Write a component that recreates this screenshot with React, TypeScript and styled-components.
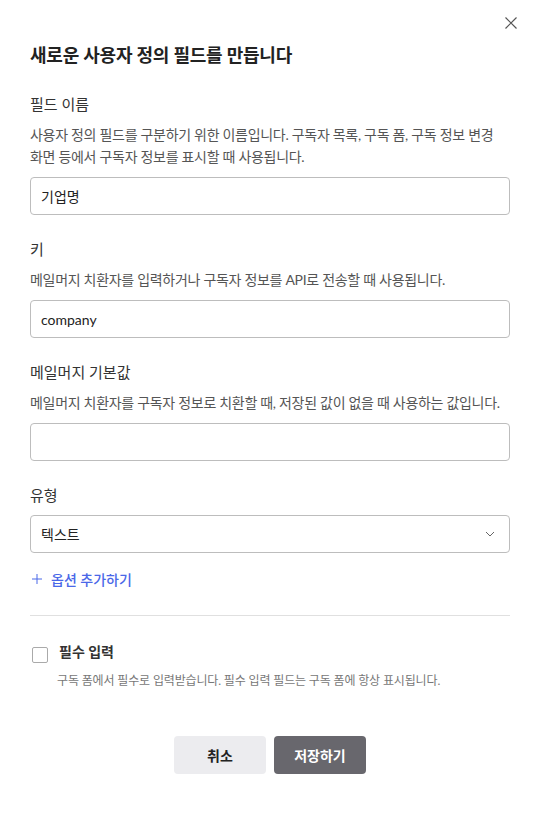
import React from "react";
import styled, { createGlobalStyle } from "styled-components";

const Global = createGlobalStyle`
  html, body { margin: 0; padding: 0; background: #fff; }
  body { font-family: Lato, "Noto Sans CJK KR", sans-serif; color: #333; word-break: keep-all; }
  * { box-sizing: border-box; }
`;

const Modal = styled.div`
  position: relative;
  width: 540px;
  height: 813px;
  background: #fff;
  padding: 42px 30px 0 30px;
  display: flex;
  flex-direction: column;
`;

const Close = styled.button`
  position: absolute;
  top: 16px;
  right: 22px;
  width: 14px;
  height: 14px;
  padding: 0;
  border: none;
  background: transparent;
  display: flex;
  align-items: center;
  justify-content: center;
`;

const Title = styled.h1`
  margin: 0 0 25px 0;
  font-size: 18px;
  line-height: 26px;
  font-weight: 700;
  letter-spacing: -0.2px;
  color: #222;
`;

const Field = styled.div<{ $gap?: number }>`
  display: flex;
  flex-direction: column;
  gap: 9px;
  margin-bottom: ${(p) => p.$gap ?? 23}px;
`;

const Label = styled.div`
  font-size: 15px;
  line-height: 22px;
  color: #333;
`;

const Desc = styled.div`
  font-size: 14px;
  line-height: 22px;
  letter-spacing: -0.3px;
  color: #555;
  word-break: keep-all;
`;

const Input = styled.div`
  height: 38px;
  border: 1px solid #bdbdbd;
  border-radius: 4px;
  padding: 0 10px;
  display: flex;
  align-items: center;
  font-size: 14px;
  color: #222;
`;

const Select = styled(Input)`
  justify-content: space-between;
  padding-right: 14px;
`;

const AddOption = styled.div`
  display: flex;
  align-items: center;
  gap: 9px;
  height: 22px;
  padding-left: 2px;
  font-size: 14px;
  font-weight: 500;
  color: #4a68e8;
  margin-bottom: 25px;
`;

const Divider = styled.hr`
  margin: 0 0 25px 0;
  border: none;
  border-top: 1px solid #e0e0e0;
`;

const CheckRow = styled.div`
  display: flex;
  align-items: flex-start;
  gap: 11px;
  padding-left: 2px;
`;

const Box = styled.span`
  width: 16px;
  height: 16px;
  margin-top: 6px;
  border: 1px solid #aaa;
  border-radius: 2px;
  flex: none;
`;

const CheckBody = styled.div`
  display: flex;
  flex-direction: column;
  gap: 9px;
`;

const CheckLabel = styled.div`
  font-size: 14px;
  line-height: 22px;
  font-weight: 700;
  color: #333;
`;

const CheckDesc = styled.div`
  font-size: 12px;
  line-height: 18px;
  letter-spacing: -0.15px;
  color: #777;
  margin-left: -2px;
`;

const Buttons = styled.div`
  display: flex;
  justify-content: center;
  gap: 8px;
  margin-top: 46px;
`;

const Button = styled.button<{ $primary?: boolean }>`
  width: 92px;
  height: 38px;
  border: none;
  border-radius: 4px;
  font-family: inherit;
  font-size: 14px;
  font-weight: 700;
  background: ${(p) => (p.$primary ? "#68676d" : "#ececef")};
  color: ${(p) => (p.$primary ? "#fff" : "#222")};
`;

export default function App() {
  return (
    <>
      <Global />
      <Modal>
        <Close aria-label="닫기">
          <svg width="14" height="14" viewBox="0 0 14 14">
            <path d="M1.5 1.5 L12.5 12.5 M12.5 1.5 L1.5 12.5" stroke="#555" strokeWidth="1.2" />
          </svg>
        </Close>
        <Title>새로운 사용자 정의 필드를 만듭니다</Title>

        <Field>
          <Label>필드 이름</Label>
          <Desc>
            사용자 정의 필드를 구분하기 위한 이름입니다. 구독자 목록, 구독 폼, 구독 정보 변경
            화면 등에서 구독자 정보를 표시할 때 사용됩니다.
          </Desc>
          <Input>기업명</Input>
        </Field>

        <Field>
          <Label>키</Label>
          <Desc>메일머지 치환자를 입력하거나 구독자 정보를 API로 전송할 때 사용됩니다.</Desc>
          <Input>company</Input>
        </Field>

        <Field>
          <Label>메일머지 기본값</Label>
          <Desc>메일머지 치환자를 구독자 정보로 치환할 때, 저장된 값이 없을 때 사용하는 값입니다.</Desc>
          <Input />
        </Field>

        <Field $gap={15}>
          <Label>유형</Label>
          <Select>
            <span>텍스트</span>
            <svg width="10" height="6" viewBox="0 0 10 6">
              <path d="M1 1 L5 5 L9 1" fill="none" stroke="#666" strokeWidth="1" />
            </svg>
          </Select>
        </Field>

        <AddOption>
          <svg width="10" height="10" viewBox="0 0 10 10">
            <path d="M5 0 V10 M0 5 H10" stroke="#4a68e8" strokeWidth="1" />
          </svg>
          <span>옵션 추가하기</span>
        </AddOption>

        <Divider />

        <CheckRow>
          <Box />
          <CheckBody>
            <CheckLabel>필수 입력</CheckLabel>
            <CheckDesc>구독 폼에서 필수로 입력받습니다. 필수 입력 필드는 구독 폼에 항상 표시됩니다.</CheckDesc>
          </CheckBody>
        </CheckRow>

        <Buttons>
          <Button>취소</Button>
          <Button $primary>저장하기</Button>
        </Buttons>
      </Modal>
    </>
  );
}
